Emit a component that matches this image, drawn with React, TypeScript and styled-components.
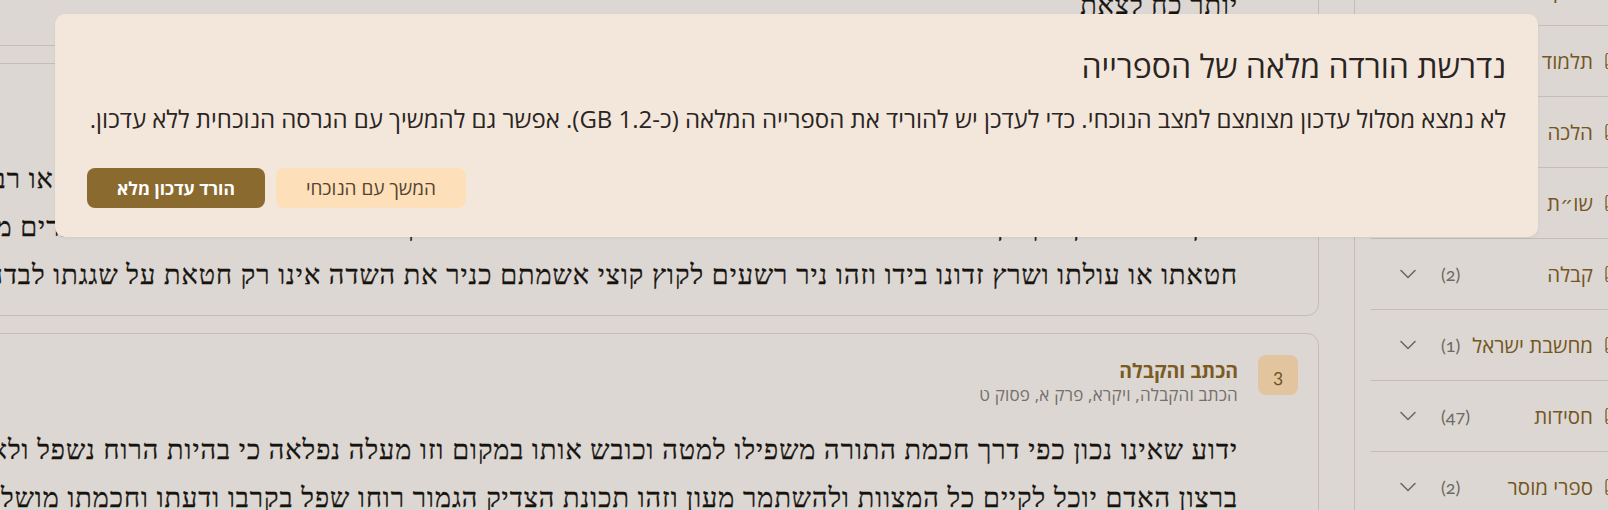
import React from "react";
import styled, { createGlobalStyle } from "styled-components";
import { ChevronDown, Book } from "lucide-react";

const GlobalStyle = createGlobalStyle`
  html, body { margin: 0; padding: 0; background: #dcd7d3; }
  body { overflow: hidden; font-family: "Open Sans", "DejaVu Sans", sans-serif; }
  * { box-sizing: border-box; }
`;

type Source = {
  num: number;
  title: string;
  ref: string;
  gap: number;
  lines: string[];
};

const sources: Source[] = [
  {
    num: 1,
    title: "אור החיים",
    ref: "אור החיים, ויקרא, פרק א, פסוק ט",
    gap: 10,
    lines: [
      "אמר הכתוב אדם כי יקריב מכם קרבן לה׳ ללמדך שכל המקריב צריך להכניע את עצמו לפני בוראו ולשבור את לבו בקרבו ולהשפיל את רוחו",
      "ובזה יתקרב אל ה׳ כי הקרבן מורה על התקרבות הנפש אל שורשה העליון ומשם תקבל כח ועוז לעמוד נגד היצר ולהתגבר עליו ולהיות לו",
      "יותר כח לצאת",
    ],
  },
  {
    num: 2,
    title: "כלי יקר",
    ref: "כלי יקר, ויקרא, פרק א, פסוק ב",
    gap: 19,
    lines: [
      "והנה ידוע כי כל אדם אשר יחטא בשגגה צריך להביא קרבן לכפר על נפשו ולשוב מדרכו הרעה כי כל גלוי לפני או רבים אחרים",
      "ויבין כי לא ניתן הקרבן אלא להכניע את לבבו ולשבור את רוחו הגסה אשר בקרבו כי כל מעשיו נגלים ככל הדברים מאז ומעולם",
      "חטאתו או עולתו ושרץ זדונו בידו וזהו ניר רשעים לקוץ קוצי אשמתם כניר את השדה אינו רק חטאת על שגגתו לבדה אלא גם על זדונו",
    ],
  },
  {
    num: 3,
    title: "הכתב והקבלה",
    ref: "הכתב והקבלה, ויקרא, פרק א, פסוק ט",
    gap: 20,
    lines: [
      "ידוע שאינו נכון כפי דרך חכמת התורה משפילו למטה וכובש אותו במקום וזו מעלה נפלאה כי בהיות הרוח נשפל ולא יתגאה על אחרים",
      "ברצון האדם יוכל לקיים כל המצוות ולהשתמר מעון וזהו תכונת הצדיק הגמור רוחו שפל בקרבו ודעתו וחכמתו מושלת בו תמיד",
    ],
  },
];

const categories = [
  { label: "תנ״ך", count: 12 },
  { label: "תלמוד", count: 6 },
  { label: "הלכה", count: 9 },
  { label: "שו״ת", count: 4 },
  { label: "קבלה", count: 2 },
  { label: "מחשבת ישראל", count: 1 },
  { label: "חסידות", count: 47 },
  { label: "ספרי מוסר", count: 2 },
];

const Page = styled.div`
  position: relative;
  direction: rtl;
  display: flex;
  align-items: flex-start;
  width: 1608px;
  height: 510px;
  overflow: hidden;
  background: #dcd7d3;
`;

const Sidebar = styled.aside`
  flex: 0 0 279px;
  align-self: stretch;
  margin-right: -25px;
  border-left: 1px solid #c4bdb6;
`;

const CategoryList = styled.div`
  margin-top: -45px;
`;

const CategoryRow = styled.div`
  display: flex;
  align-items: center;
  gap: 10px;
  height: 71px;
  margin-left: 16px;
  padding: 0 12px 0 23px;
  border-bottom: 1px solid #c4bdb6;
  color: #74561f;
`;

const CategoryLabel = styled.span`
  flex: 1;
  white-space: nowrap;
  font-size: 20.5px;
  color: #74561f;
`;

const CategoryCount = styled.span`
  margin-left: 9px;
  font-family: Lato, "Open Sans", sans-serif;
  font-size: 18px;
  font-variant-numeric: oldstyle-nums;
  color: #6e6963;
`;

const Main = styled.main`
  flex: 1;
  min-width: 0;
  margin-top: -198px;
  padding-right: 35px;
  display: flex;
  flex-direction: column;
  gap: 17px;
`;

const Card = styled.section`
  display: flex;
  gap: 20px;
  margin-left: -70px;
  padding: 20px 20px 16px;
  border: 1px solid #c4bdb6;
  border-radius: 12px;
`;

const Badge = styled.div`
  flex: 0 0 40px;
  height: 40px;
  margin-top: 1px;
  display: grid;
  place-items: center;
  border-radius: 8px;
  background: #e2c59e;
  color: #6f5322;
  font-family: Lato, "Open Sans", sans-serif;
  font-size: 19px;
  font-variant-numeric: oldstyle-nums;
`;

const CardBody = styled.div`
  flex: 1;
  min-width: 0;
`;

const CardHeader = styled.div`
  padding-top: 4px;
`;

const CardTitle = styled.div`
  font-size: 19.5px;
  font-weight: 700;
  line-height: 26px;
  color: #7a5a1f;
`;

const CardRef = styled.div`
  font-size: 17px;
  letter-spacing: 0.2px;
  line-height: 22px;
  color: #74706b;
`;

const Passage = styled.div<{ $gap: number }>`
  margin-top: ${(p) => p.$gap}px;
  font-family: "Liberation Serif", "DejaVu Serif", serif;
  font-size: 27px;
  letter-spacing: 1px;
  color: #16130f;
  -webkit-text-stroke: 0.3px #16130f;
`;

const PassageLine = styled.div`
  height: 48px;
  line-height: 48px;
  white-space: nowrap;
  text-align: start;
`;

const Dialog = styled.div`
  position: absolute;
  top: 14px;
  left: 55px;
  width: 1483px;
  padding: 31px 32px 29px;
  border-radius: 10px;
  background: #f3e7dc;
  box-shadow: 0 1px 3px rgba(0, 0, 0, 0.06);
`;

const DialogTitle = styled.h2`
  margin: 0;
  font-size: 32px;
  font-weight: 400;
  line-height: 42px;
  color: #2a2522;
`;

const DialogText = styled.p`
  margin: 17px 0 0;
  font-size: 24px;
  line-height: 30px;
  white-space: nowrap;
  color: #2a2522;
`;

const Actions = styled.div`
  display: flex;
  justify-content: flex-end;
  gap: 11px;
  margin-top: 34px;
`;

const Button = styled.button<{ $primary?: boolean }>`
  height: 40px;
  padding: 0 30px;
  border: none;
  border-radius: 8px;
  font-family: "Open Sans", "DejaVu Sans", sans-serif;
  font-size: ${(p) => (p.$primary ? "17.5px" : "19px")};
  font-weight: ${(p) => (p.$primary ? 700 : 400)};
  background: ${(p) => (p.$primary ? "#8b6a2f" : "#fddfba")};
  color: ${(p) => (p.$primary ? "#ffffff" : "#554430")};
  cursor: pointer;
`;

const App = () => (
  <Page>
    <GlobalStyle />
    <Sidebar>
      <CategoryList>
        {categories.map((c) => (
          <CategoryRow key={c.label}>
            <Book size={18} strokeWidth={1.6} />
            <CategoryLabel>{c.label}</CategoryLabel>
            <CategoryCount>({c.count})</CategoryCount>
            <ChevronDown size={28} strokeWidth={1.4} color="#6e6963" />
          </CategoryRow>
        ))}
      </CategoryList>
    </Sidebar>
    <Main>
      {sources.map((s) => (
        <Card key={s.num}>
          <Badge>{s.num}</Badge>
          <CardBody>
            <CardHeader>
              <CardTitle>{s.title}</CardTitle>
              <CardRef>{s.ref}</CardRef>
            </CardHeader>
            <Passage $gap={s.gap}>
              {s.lines.map((line, i) => (
                <PassageLine key={i}>{line}</PassageLine>
              ))}
            </Passage>
          </CardBody>
        </Card>
      ))}
    </Main>
    <Dialog>
      <DialogTitle>נדרשת הורדה מלאה של הספרייה</DialogTitle>
      <DialogText>
        לא נמצא מסלול עדכון מצומצם למצב הנוכחי. כדי לעדכן יש להוריד את הספרייה המלאה (כ-1.2 GB). אפשר גם להמשיך עם הגרסה הנוכחית ללא עדכון.
      </DialogText>
      <Actions>
        <Button>המשך עם הנוכחי</Button>
        <Button $primary>הורד עדכון מלא</Button>
      </Actions>
    </Dialog>
  </Page>
);

export default App;
